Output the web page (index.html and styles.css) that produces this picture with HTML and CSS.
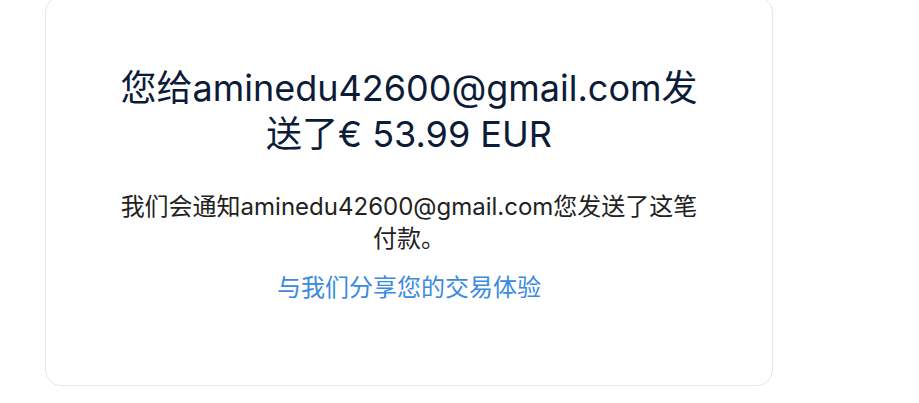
FILE: index.html
```html
<!DOCTYPE html>
<html lang="zh-CN">

<head>
    <meta charset="UTF-8" />
    <meta name="viewport" content="width=device-width, initial-scale=1.0" />
    <title>付款已发送</title>
    <link rel="stylesheet" href="styles.css">
</head>

<body>
    <!-- 付款成功卡片 -->
    <div class="card">
        <h1 class="title">您给aminedu42600@gmail.com发送了€ 53.99 EUR</h1>
        <p class="note">我们会通知aminedu42600@gmail.com您发送了这笔付款。</p>
        <a class="share-link" href="#">与我们分享您的交易体验</a>
    </div>
</body>

</html>
```
FILE: styles.css
```css
* {
    box-sizing: border-box;
}

body {
    font-family: 'Inter', 'Noto Sans CJK SC', sans-serif;
    margin: 0;
    padding: 0;
    background-color: #ffffff;
}

.card {
    width: 728px;
    margin: -4px 0 0 45px;
    padding: 68px 64px 81px;
    background-color: #ffffff;
    border: 1px solid #e6e6e6;
    border-radius: 16px;
    display: flex;
    flex-direction: column;
    align-items: center;
    text-align: center;
}

.title {
    margin: 0;
    font-size: 36px;
    line-height: 46px;
    font-weight: 400;
    color: #0c1c38;
}

.note {
    margin: 34px 0 0;
    max-width: 590px;
    font-size: 24px;
    line-height: 32px;
    color: #222222;
}

.share-link {
    margin-top: 17px;
    font-size: 24px;
    line-height: 32px;
    color: #3a8ade;
    text-decoration: none;
}
```
